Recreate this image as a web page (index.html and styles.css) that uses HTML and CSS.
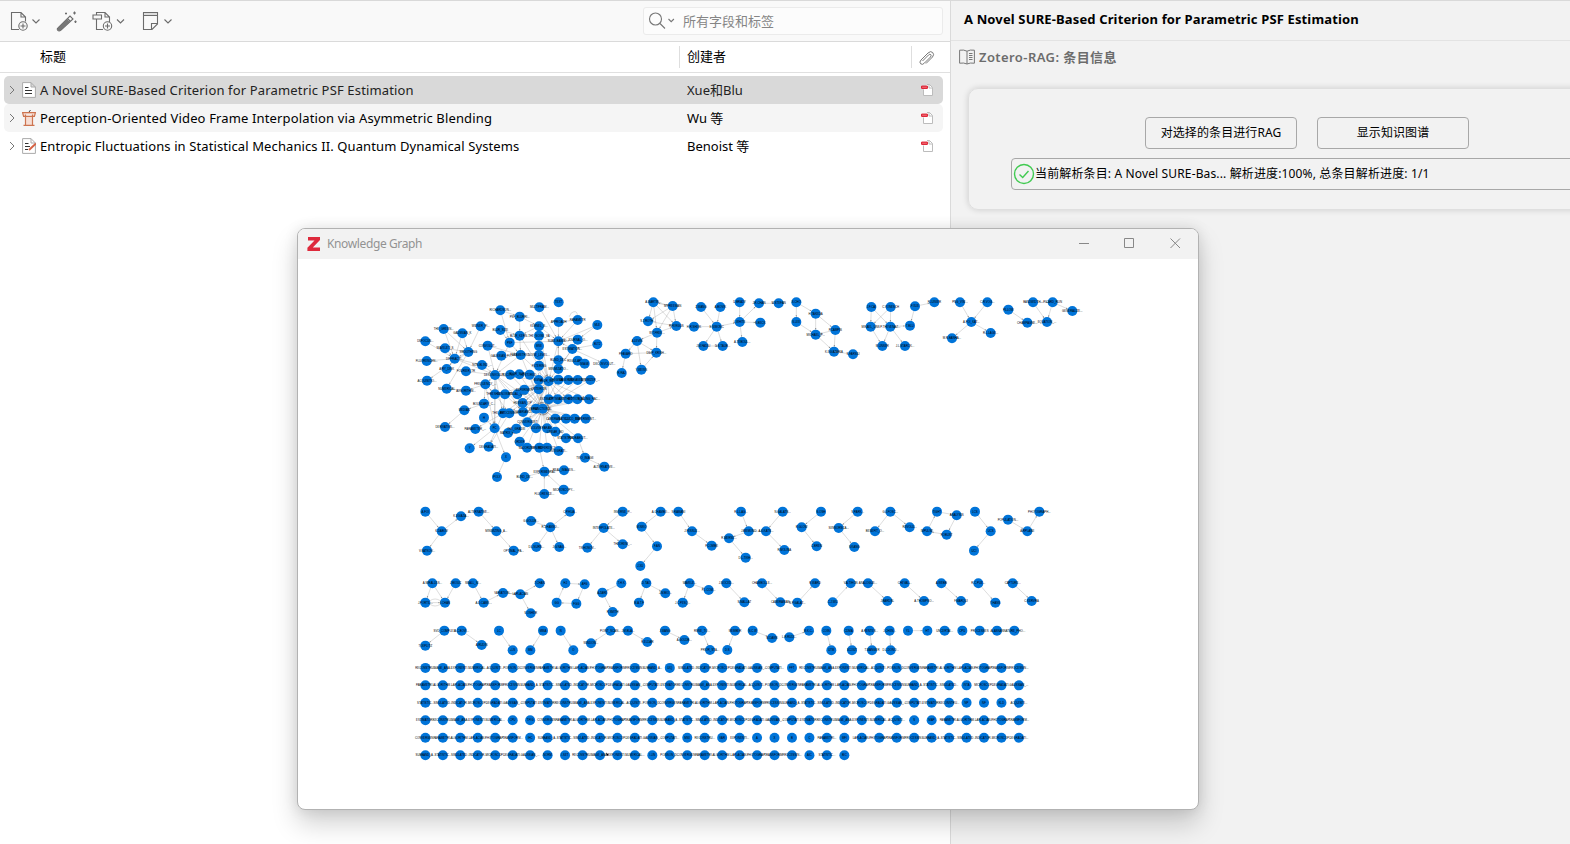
FILE: index.html
```html
<!DOCTYPE html>
<html lang="zh-CN">
<head>
<meta charset="utf-8">
<title>Zotero</title>
<link rel="stylesheet" href="styles.css">
</head>
<body>
<div class="app">
  <main class="library">
    <div class="toolbar">
      <div class="tools">
        <svg class="tool new-item" width="32" height="22" viewBox="0 0 32 22"><path d="M9 18.5H1.5V1.5H11L15.5 6V10.5M11 1.5V6H15.5"/><circle cx="13" cy="15" r="4.2"/><path d="M13 12.5V17.500M10.500 15H15.500M22.500 8.500L26 12L29.500 8.500"/></svg>
        <svg class="tool wand" width="22" height="22" viewBox="0 0 22 22"><path d="M2 17L14 5L17 8L5 19Q3 20.500 1.800 19.300T2 17ZM11.500 7.500L14.500 10.500"/><path class="fill" d="M2 17L11 8L14 11L5 19L2 19.500Z"/><path d="M10 1.500V3.500M9 2.500H11M18.500 .5V3.500M17 2H20M19.500 9.500V12M18.200 10.700H20.700"/></svg>
        <svg class="tool attach" width="34" height="22" viewBox="0 0 34 22"><path d="M4.500 8V18.500H11M4.500 4V1.500H13L17.500 6V11M13 1.500V6H17.500M1 4H9.500V8H1Z"/><circle cx="15.500" cy="15" r="4.200"/><path d="M15.500 12.500V17.500M13 15H18M25 8.500L28.500 12L32 8.500"/></svg>
        <svg class="tool note" width="32" height="22" viewBox="0 0 32 22"><path d="M1.500 1.500H15.500V13L10 18.500H1.500ZM1.500 4.500H15.500M15.500 12.500H9.500V18.500M22.500 8.500L26 12L29.500 8.500"/><path class="tint" d="M2 2H15V4H2Z"/></svg>
      </div>
      <div class="search">
        <svg width="28" height="20" viewBox="0 0 28 20"><circle cx="7.500" cy="8" r="6"/><path d="M12 12.500L17 17.500M20.500 8L23.200 10.700L25.900 8"/></svg>
        <span>所有字段和标签</span>
      </div>
    </div>
    <div class="columns">
      <div class="col-title">标题</div>
      <div class="col-creator">创建者</div>
      <div class="col-clip"><svg width="18" height="18" viewBox="0 0 18 18"><path d="M4.500 12L10.500 6Q12 4.700 12.800 5.600T12.500 8L6.500 14Q4.500 16.300 2.700 14.800T3 11L10 4Q12.800 1.500 14.700 3.500T14.500 8L8 14.500"/></svg></div>
    </div>
    <div class="rows">
      <div class="row selected">
        <svg class="twisty" width="8" height="10" viewBox="0 0 8 10"><path d="M2 1L6 5L2 9"/></svg>
        <svg class="type" width="14" height="16" viewBox="0 0 14 16"><path class="paper" d="M.6 .6H9L13.400 5V15.400H.6ZM9 .6V5H13.400"/><path class="lines" d="M3 5.500H6.500M3 8.500H10M3 11.500H10"/></svg>
        <span class="name t1">A Novel SURE-Based Criterion for Parametric PSF Estimation</span>
        <span class="creator">Xue和Blu</span>
        <svg class="pdf" width="13" height="14" viewBox="0 0 13 14"><path d="M2.500 6.500V12.500H11.500V4.500L8.500 1.500H6M8 1.500V5H11.500"/><path class="red" d="M.6 3.100H6.400V5.400H.6Z"/></svg>
      </div>
      <div class="row alt">
        <svg class="twisty" width="8" height="10" viewBox="0 0 8 10"><path d="M2 1L6 5L2 9"/></svg>
        <svg class="type" width="14" height="16" viewBox="0 0 14 16"><path class="podium" d="M.6 2.600H13.400L12.400 6.400H1.600ZM3.500 4.500V15.400H10.500V4.500M1.500 15.400H12.500"/><path class="mic" d="M7 2L8.500 0"/></svg>
        <span class="name t2">Perception-Oriented Video Frame Interpolation via Asymmetric Blending</span>
        <span class="creator">Wu 等</span>
        <svg class="pdf" width="13" height="14" viewBox="0 0 13 14"><path d="M2.500 6.500V12.500H11.500V4.500L8.500 1.500H6M8 1.500V5H11.500"/><path class="red" d="M.6 3.100H6.400V5.400H.6Z"/></svg>
      </div>
      <div class="row">
        <svg class="twisty" width="8" height="10" viewBox="0 0 8 10"><path d="M2 1L6 5L2 9"/></svg>
        <svg class="type" width="14" height="16" viewBox="0 0 14 16"><path class="paper" d="M.6 .6H9L13.400 5V15.400H.6ZM9 .6V5H13.400"/><path class="lines" d="M3 5.500H6.500M3 8.500H8M3 11.500H6"/><path class="pencil" d="M7 12L14 5.500"/></svg>
        <span class="name t3">Entropic Fluctuations in Statistical Mechanics II. Quantum Dynamical Systems</span>
        <span class="creator">Benoist 等</span>
        <svg class="pdf" width="13" height="14" viewBox="0 0 13 14"><path d="M2.500 6.500V12.500H11.500V4.500L8.500 1.500H6M8 1.500V5H11.500"/><path class="red" d="M.6 3.100H6.400V5.400H.6Z"/></svg>
      </div>
    </div>
  </main>
  <aside class="details">
    <h1><span>A Novel SURE-Based Criterion for Parametric PSF Estimation</span></h1>
    <div class="section-head">
      <svg width="16" height="16" viewBox="0 0 16 16"><path d="M8 2.200Q5 .5 .6 1.200V14.200Q5 13.500 8 15Q11 13.500 15.400 14.200V1.200Q11 .5 8 2.200ZM8 2.200V15M10 4.500H13.500M10 6.500H13.500M10 8.500H13.500M10 10.500H13.500"/></svg>
      <span>Zotero-RAG: 条目信息</span>
    </div>
    <section class="card">
      <div class="buttons"><button><span>对选择的条目进行RAG</span></button><button><span>显示知识图谱</span></button></div>
      <div class="status">
        <svg width="22" height="22" viewBox="0 0 22 22"><circle cx="11" cy="11" r="9.500"/><path d="M6.500 11.500L9.700 14.500L15.500 8"/></svg>
        <span>当前解析条目: A Novel SURE-Bas... 解析进度:100%, 总条目解析进度: 1/1</span>
      </div>
    </section>
  </aside>
</div>
<div class="window">
  <header>
    <svg class="z" width="14" height="14" viewBox="0 0 14 14"><path d="M1 0H13V3L5.800 10.500H13V14H.4V10.800L7.500 3.500H1Z"/></svg>
    <span>Knowledge Graph</span>
    <svg class="controls" width="104" height="12" viewBox="0 0 104 12"><path d="M0 5.500H10M45.500 .5H54.500V9.500H45.500ZM91.500 .5L101 10M101 .5L91.500 10"/></svg>
  </header>
  <svg id="graph" class="graph" width="900" height="549" viewBox="298 259 900 549"></svg>
</div>
<script src="graph.js"></script>
</body>
</html>
```

FILE: styles.css
```css
* { box-sizing: border-box; }
body {
  margin: 0;
  width: 1570px;
  height: 844px;
  overflow: hidden;
  font-family: "Noto Sans", "Noto Sans CJK SC", sans-serif;
  font-size: 13px;
  color: #000;
}
svg { flex: none; fill: none; }
span { white-space: nowrap; }
.app { display: flex; height: 844px; border-top: 1px solid #d9d9d9; }
.library { width: 950px; background: #fff; }
.toolbar {
  height: 41px;
  display: flex;
  justify-content: space-between;
  align-items: center;
  padding: 0 7px 0 10px;
  background: #f9f9f9;
  border-bottom: 1px solid #dadada;
}
.tools { display: flex; align-items: center; padding-top: 2px; }
.tool { stroke: #6c6c6c; stroke-width: 1.1; }
.tool .fill { fill: #777; stroke: none; }
.tool .tint { fill: #ddd; stroke: none; }
.wand { margin-left: 14px; }
.attach { margin-left: 14px; }
.note { margin-left: 16px; }
.search {
  width: 300px;
  height: 28px;
  display: flex;
  align-items: center;
  gap: 7px;
  padding-left: 4px;
  border: 1px solid #ebebeb;
  border-radius: 3px;
  background: #fcfcfc;
  color: #858585;
}
.search svg { stroke: #777; stroke-width: 1.1; }
.search span { padding-bottom: 2px; }
.columns {
  display: flex;
  align-items: center;
  height: 31px;
  border-bottom: 1px solid #e0e0e0;
}
.columns div { height: 22px; line-height: 20px; }
.col-title { width: 679px; padding-left: 40px; }
.col-creator { width: 232px; padding-left: 7px; border-left: 1px solid #dedede; }
.col-clip { padding: 3px 0 0 6px; border-left: 1px solid #dedede; }
.col-clip svg { display: block; stroke: #777; stroke-width: 1; }
.rows { padding: 3px 7px 0 4px; }
.row { display: flex; align-items: center; height: 28px; border-radius: 5px; line-height: 28px; }
.selected { background: #d9d9d9; color: #222; }
.alt { background: #f5f5f5; }
.twisty { margin-left: 4px; stroke: #777; stroke-width: 1; }
.type { margin: 0 4px 0 6px; }
.paper { fill: #fff; stroke: #aaa; }
.lines { stroke: #333; stroke-width: 1.1; }
.podium { fill: #f7ded4; stroke: #cd7450; stroke-width: 1.2; }
.mic { stroke: #444; }
.pencil { stroke: #d66243; stroke-width: 2; }
.name { width: 647px; }
.t1 { letter-spacing: .155px; }
.t2 { letter-spacing: .145px; }
.t3 { letter-spacing: .105px; }
.creator { width: 234px; }
.pdf path { fill: #fff; stroke: #bcbcbc; }
.pdf .red { fill: #f36670; stroke: #d9182b; }
.details {
  width: 620px;
  background: #f2f2f2;
  border-left: 1px solid #dadada;
  overflow: hidden;
}
.details h1 {
  margin: 0;
  height: 40px;
  padding-left: 13px;
  border-bottom: 1px solid #e3e3e3;
  font-size: 13px;
  line-height: 37px;
  font-weight: 700;
  letter-spacing: .14px;
}
.section-head {
  display: flex;
  align-items: center;
  gap: 4px;
  height: 32px;
  padding-left: 8px;
  color: #6c6c6c;
  font-weight: 600;
  letter-spacing: .42px;
}
.section-head svg { stroke: #777; stroke-width: 1; }
.section-head span { padding-bottom: 1px; }
.card {
  width: 660px;
  height: 122px;
  margin: 15px 0 0 17px;
  padding: 28px 0 0 42px;
  border: 1px solid #dfdfdf;
  border-radius: 10px;
  box-shadow: 0 0 6px rgba(0, 0, 0, .15);
}
.buttons { display: flex; gap: 20px; padding-left: 134px; }
.buttons button {
  width: 152px;
  height: 32px;
  padding: 0 0 2px;
  border: 1px solid #a8a8a8;
  border-radius: 4px;
  background: #f2f2f2;
  color: #000;
  font: 12px "Noto Sans", "Noto Sans CJK SC", sans-serif;
  letter-spacing: .1px;
}
.status {
  display: flex;
  align-items: center;
  height: 32px;
  margin-top: 9px;
  padding-left: 1px;
  border: 1px solid #a8a8a8;
  border-radius: 4px;
  font-size: 12px;
  letter-spacing: .14px;
}
.status svg { stroke: #41ca51; stroke-width: 1.4; }
.status span { padding-bottom: 2px; }
.window {
  position: absolute;
  left: 297px;
  top: 228px;
  width: 902px;
  height: 582px;
  border: 1px solid #b2b2b2;
  border-radius: 8px;
  background: #fff;
  box-shadow: 0 14px 26px rgba(0, 0, 0, .18), 0 0 14px rgba(0, 0, 0, .1);
  overflow: hidden;
}
.window header {
  display: flex;
  align-items: center;
  height: 30px;
  padding: 0 15px 1px 9px;
  background: #f2f2f2;
  color: #929292;
  font-size: 12px;
}
.window header span { letter-spacing: -.38px; }
.z { margin-right: 6px; fill: #de2a3c; }
.controls { margin-left: auto; stroke: #888; stroke-width: 1; }
.graph { display: block; }
.edge { stroke: #999; stroke-width: 1; fill: none; }
.tip { fill: #888; }
.node { fill: #0074d9; }
.label { font: 8.600px "Liberation Sans", sans-serif; text-anchor: middle; fill: #000; }
.cursor { fill: #000; }
```

FILE: graph.js
```js
// Each cluster has an origin in window pixels; node positions are in thirds of a pixel.
const clusters = [
  { at: [410, 290.3],
    nodes: `446,36,TEXT 388,51,MULTIFRAM... 271,60,RICHARDSON... 329,79,PSF_BLURRI... 212,108,WIENER_FI... 101,116,THE_GREEN... 157,129,GAUSSIAN_K 446,95,APPROACH 503,89,PARAMETR 562,104,MLE 387,108,KERNEL_S... 387,136,THE_NOISE_VA 271,119,BLUR_SIZE 329,136,BLUR_KERN... 46,153,DEFOCUS... 299,157,PSF 445,153,SURE-BASED... 503,148,JOURNAL_O... 562,162,BLT2 233,166,CONVOLUT... 387,167,MSE 105,174,WAVELET_S 175,185,SMOOTHING 487,176,ESTIMATION... 274,196,GAUSSIAN_FI... 332,194,PARAMETRIC... 387,194,NOISE_LEVEL... 134,205,DIFFRACTI... 50,212,FLUORESCEN... 216,224,NON-BLIND_... 110,236,AIRY_DISK 445,210,BLIND_DEC 445,236,MINIMIZATIO... 503,211,REGULARIZE... 524,220,IMAGE 583,220,DECONVOLUT... 387,226,FILTERING 168,243,FOURIER_TR 51,271,ACQUISITIO... 255,254,DECONVOLUT... 301,253,RECOVERY 328,252,BLUR_SURE... 359,253,RESTORED_I 386,269,SIGNAL 416,273,BLUR_SURE 445,268,ORIGINAL_I 475,269,OBSERVED_I 503,269,UNBIASED_E 541,269,MINIMIZER_... 226,282,FREQUENCY_... 110,295,NUMERICAL 168,301,ALGORITHM... 255,312,THRESHOLD 285,312,DENOISING 322,312,VISUAL_QUA 343,298,EXPERIMEN 386,297,CRITERION 416,327,ESTIMATE_O 443,327,OPTIMALITY 475,327,SYNTHETIC_I 502,327,MOTION_BLU 537,327,SCALING_FAC... 222,340,BOUNDARY_C... 338,338,HESSIAN_OP 163,360,MEDIAN 222,382,H 279,369,THE_AUTHORS 298,369,PROCESSOR 339,365,COVARIANCE 378,355,VARIANCE 398,355,FUNCTIONAL 436,385,CAMERAMAN 468,385,SATELLITE 494,385,COCO_IMAGE 527,385,EXPERIMENT... 105,410,DERIVATIVE... 196,416,PARAMETER_... 254,414,PC 294,428,MATRIX_RE 319,415,THE_GRADIE 352,396,CONVERGENT 378,414,SOLVER 411,414,PARAM 436,424,LINEAR_MO 468,444,STATISTICAL 504,444,PROBABILIT... 179,474,Y 236,469,DEGRADATI... 329,454,ORDER 351,472,MAJORIZER 388,472,MINIMIZED 411,472,REFERENCE 446,482,INTEGRATI... 288,501,X 261,560,POLY 525,502,TWO_IMAGE 583,529,ALTERNATIVE... 344,560,BLIND_DE... 403,544,EXPERIMENTAL 462,540,REAL_IMAGES... 403,611,FLUORESCE... 461,598,MICROSCOPY...`,
    edges: '1-16 2-3 2-15 3-13 3-10 4-22 5-27 5-22 6-27 6-22 7-16 8-16 8-7 9-17 9-16 10-13 10-16 12-15 12-13 14-27 15-16 15-39 17-16 18-23 19-25 19-39 21-27 21-22 22-27 23-16 23-35 24-25 25-39 26-44 27-28 27-30 27-39 27-29 22-38 22-50 29-39 37-39 39-44 39-49 39-52 31-16 32-16 16-44 20-44 23-32 23-44 49-52 50-51 49-51 39-66 39-77 49-77 52-77 53-68 54-68 49-62 62-64 64-75 65-77 66-76 77-86 77-93 93-94 66-87 67-87 13-44 25-44 25-70 26-70 55-70 56-70 63-70 68-70 43-70 42-70 41-70 40-70 39-70 44-70 45-70 46-70 47-70 48-70 57-70 58-70 59-70 60-70 61-70 71-70 72-70 73-70 74-70 78-70 79-70 80-70 81-70 82-70 83-70 84-70 85-70 88-70 89-70 90-70 91-70 92-70 44-57 44-58 44-59 44-61 44-63 44-66 44-67 44-68 44-69 44-52 44-53 44-54 44-79 44-80 39-63 39-68 85-95 95-96 90-98 97-98 99-98 100-98 101-98 10-44 13-25 15-25 52-67 53-66' },
  { at: [610, 290.3],
    nodes: `130,36,A.MARTIN... 188,47,M.FREEMAN 114,93,S.T.ROTH... 199,107,R.FERGUS 141,127,W.T.FREE... 81,152,A.LEVIN 47,190,P.FAVARO 139,187,DILIP_KRISH... 35,248,R.RAJ 94,238,Y.WEISS 273,50,Z.WANG 331,50,A.BOVIK 252,109,H.R.SHEIK 320,109,E.SIMONC 389,36,D.BRADY 389,95,L.WHITE 447,39,J.R.CHAN 506,39,W.STEFAN 451,97,S.BECK 397,155,A.TEBOUL... 280,167,J.M.FADILI 338,167,D.S.TAUB... 559,36,S.CHO 559,95,S.LEE 617,70,H.TAKEDA 617,133,MICHAEL_P... 676,119,P.CAMPIS 672,184,K.EGIAZARIA`,
    edges: '0-2 0-3 0-4 1-0 1-2 1-3 1-4 0-1 2-3 4-3 4-5 4-7 5-6 5-7 5-9 6-7 6-8 9-7 10-13 11-13 12-13 13-15 13-20 13-21 14-15 15-16 16-17 15-18 15-19 20-21 22-23 22-24 23-25 24-25 24-26 26-25 25-27 26-27' },
  { at: [850, 290.3],
    nodes: `9,192,S.FARSIU 64,50,J.F.CAI 122,50,C.VONESCH 195,48,F.XUE 253,36,F.LUISIER 62,109,MIKAEL_UNS 121,109,P.THEVENAZ... 180,106,T.BLU 97,167,M.UNSER 165,167,J.L.STARCK... 330,36,PNG_VISI... 412,36,C.R.VOG... 364,95,A.FOI_KAT... 306,144,M.R.BANHA... 422,128,R.L.LAGE... 475,58,PILLOW 532,97,CHAMPAGNE... 549,36,BANDWIDTH... 608,36,PICARD_RUN 591,95,EQUATION_... 667,62,GENERALIZE... -48,184,`,
    edges: '0-21 1-5 1-6 2-5 2-6 5-8 6-8 6-9 6-7 3-7 3-4 10-12 11-12 12-13 12-14 15-16 17-19 18-19 18-20 17-18' },
  { at: [410, 500.3],
    nodes: `46,34,A.FOI 95,93,K.DABOV 153,48,K.EGIAZA... 51,151,V.KATKOV... 206,34,ALTERNATIVE... 259,93,MINIMIZING_A... 311,151,OPTIMAL_PA... 363,62,G.GOLUB... 421,81,R.J.HANSO... 480,34,C.P.HUA... 379,140,D.L.NURN... 448,140,J.G.NAG... 638,34,INVERSE_P... 581,83,INTERPOLATE... 532,142,TIKHONOV... 638,132,THEOREM_... 752,34,A.CHAMBO... 695,79,M.NIKO 741,138,F.AN 691,197,J.XU 805,34,S.RAMANI 846,93,J.FESSLE... 905,136,P.COMBE 67,249,A.MIRALLES... 137,249,J.BIOUC 46,307,J.PORTIL... 105,307,J.CHAN 189,249,SMALL_SI... 221,307,A.D.CAME... 279,278,VARIATION... 331,282,LAPLACIAN 389,249,T.CHAN 362,339,S.OSHER 466,249,HJ 524,252,AFG 440,307,GG 499,310,FGG 634,249,T.H.K 577,277,A.ZARE 608,335,R.SMITH 709,249,D.TAO 766,279,J.M.BIO... 687,307,M.A.T.F 839,249,WAVELE... 896,269,P.L.COM... 818,307,J.C.PESQ... 949,249,J.NOCED... 103,391,SVD_COMPLEX 46,436,TOEPLITZ 155,391,A.C.BOVI... 215,434,A.RUDIN 267,391,LC 308,450,+LS 399,391,MMA 361,450,MM 452,391,N 490,450,O 601,391,POINT_SCAN... 543,429,WINDOW... 654,391,J.M.BLA... 712,425,R.ELDAR 765,391,J.WANG 823,419,A.GOLDB... 876,391,RMSE_TO... 900,449,PRIOR_STA... 1003,306,`,
    edges: '0-1 1-2 1-3 4-5 5-6 7-8 8-9 8-10 8-11 12-13 13-14 13-15 16-17 17-18 18-19 20-21 21-22 23-25 23-26 24-26 25-26 27-28 28-29 29-30 30-31 30-32 33-34 34-36 36-35 35-33 37-38 38-39 40-41 40-42 43-44 43-45 46-65 47-48 49-50 51-52 53-54 55-56 57-58 59-60 61-62 63-64' },
  { at: [730, 500.3],
    nodes: `33,34,R.L.LAG... 56,93,J.BIEMOND -3,114,R.MERSE... 47,172,D.L.TIKH... 158,34,N.GALATS... 108,93,A.K.KATS... 163,149,R.MOLINA 273,34,S.OSH 215,81,R.GLOW 260,138,C.BREN 383,34,S.PARK... 326,83,SENSORSCA... 373,140,S.KANG 481,34,G.J.FOSC... 435,93,BENEFIT_O... 539,81,REVOLU... 621,34,TIGHT 680,45,ANALYSIS 591,93,IMPULSE 650,103,ROBUST 735,34,LCS 782,93,UCS 732,151,UCI 834,58,POPULATION... 892,93,AIRPLANE 928,34,PHOTOGRAPH... 43,306,S.MALLAT 96,249,CHAMBOLLE... 151,306,CAMERAMAN 202,307,N.P.GALAT... 255,249,R.WARD 308,306,C.J.WU 362,249,V.A.TIHON 414,249,ANALOGUE... 472,302,J.BARDSL 524,249,CHEVAL... 582,302,A.THOMPSO... 634,249,A.WEBB 693,302,F.MARQUI 745,249,R.C.PUE... 796,307,T.HANS 848,249,CAPTURE... 905,302,C.KERVRA 15,391,MEMBER -8,449,D.S 68,391,N.C.W 126,413,M.DAVIS 178,411,L.R.RUDI... 237,391,M.K.C... 289,391,COIN 304,450,UTM 356,391,CDMA 366,450,SCOUT 419,391,A.RENTES... 426,450,T.WANGER 479,391,J.CHEN... 482,450,D.L.DONO... 534,391,Y.L 592,391,HT 644,391,UNCERTAI... 697,391,CPU 749,391,PROCESSES 801,391,ALASKAN 853,391,NATURE_PHO...`,
    edges: '0-1 1-2 2-3 1-5 4-5 5-6 7-8 8-9 10-11 11-12 13-14 13-15 16-17 17-19 19-18 18-16 20-21 21-22 23-24 24-25 27-28 29-30 31-32 33-34 35-36 37-38 39-40 41-42 43-44 45-46 47-48 49-50 51-52 53-54 55-56 57-58' }
];
const rows = [
  'RECONSTRU LAPLACIAN DEGRADATI POISSON_D STATISTIC IMAGE_ANA PHOTOGRAP GAUSSIAN_ CONVERGEN SIMULATED EXPONENTI TRANSFORM COMPUTATI PARAMETRI',
  'INDICATOR NUMERICAL PROCESSIN ESTIMATOR ALGORITHM MICROSCOP ACQUISITI SUBBAND_A'
].join(' ').split(' ');
const shortLabels = { '0,14': 'UIQ', '0,21': 'FFT', '1,31': 'ISTA', '2,31': 'NP', '2,32': 'NF', '2,33': 'KLD', '3,5': 'CPU', '3,6': 'T.FIG', '3,28': 'S', '3,29': 'MAP', '4,6': 'IHC', '4,15': 'MSE', '4,17': 'VAR', '4,19': 'A', '4,20': 'X', '4,21': 'B', '4,22': 'C', '4,24': 'MFI', '5,7': 'NORM', '5,8': 'I.SET', '5,13': 'I.LIN', '5,22': 'AIC', '5,24': 'BIC' };

const ns = 'http://www.w3.org/2000/svg';
const svg = document.getElementById('graph');
function add(parent, tag, attrs, text) {
  const el = document.createElementNS(ns, tag);
  for (const k in attrs) el.setAttribute(k, attrs[k]);
  if (text) el.textContent = text;
  parent.appendChild(el);
  return el;
}
function node(g, x, y, label) {
  if (!label) return;
  add(g, 'circle', { class: 'node', cx: x, cy: y, r: 15 });
  add(g, 'text', { class: 'label', x: x, y: y + 3 }, label);
}
for (const c of clusters) {
  const g = add(svg, 'g', { transform: `translate(${c.at[0]} ${c.at[1]}) scale(.33333)` });
  const pts = c.nodes.split(' ').map(s => { const p = s.split(','); return [+p[0], +p[1], p[2]]; });
  for (const e of c.edges.split(' ')) {
    const [a, b] = e.split('-').map(i => pts[i]);
    const dx = b[0] - a[0], dy = b[1] - a[1], d = Math.hypot(dx, dy) || 1;
    const ux = dx / d, uy = dy / d, tx = b[0] - ux * 15, ty = b[1] - uy * 15;
    add(g, 'path', { class: 'edge', d: `M${a[0]} ${a[1]}L${b[0]} ${b[1]}` });
    add(g, 'path', { class: 'tip', d: `M${tx} ${ty}L${tx - ux * 5 - uy * 2.2} ${ty - uy * 5 + ux * 2.2}L${tx - ux * 5 + uy * 2.2} ${ty - uy * 5 - ux * 2.2}Z` });
  }
  for (const p of pts) node(g, p[0], p[1], p[2]);
}
const grid = add(svg, 'g', { transform: 'translate(425.400 667.900) scale(.33333)' });
for (let r = 0; r < 6; r++) {
  for (let k = 0; k < (r === 5 ? 25 : 35); k++) {
    node(grid, k * 52.37, r * 52.4, shortLabels[`${r},${k}`] || rows[(r * 13 + k * 5) % rows.length] + '...');
  }
}
const loops = add(svg, 'g', { transform: 'translate(410 500) scale(.33333)' });
add(loops, 'path', { class: 'edge', d: 'M60 302Q75 292 91 302M60 313Q75 323 91 313' });
const arc = add(svg, 'g', { transform: 'translate(410 290) scale(.33333)' });
add(arc, 'path', { class: 'edge', d: 'M478 80Q482 66 492 65T502 76' });
add(svg, 'path', { class: 'cursor', d: 'M606 752.500L608.500 754.500L607.300 756Z' });
```
